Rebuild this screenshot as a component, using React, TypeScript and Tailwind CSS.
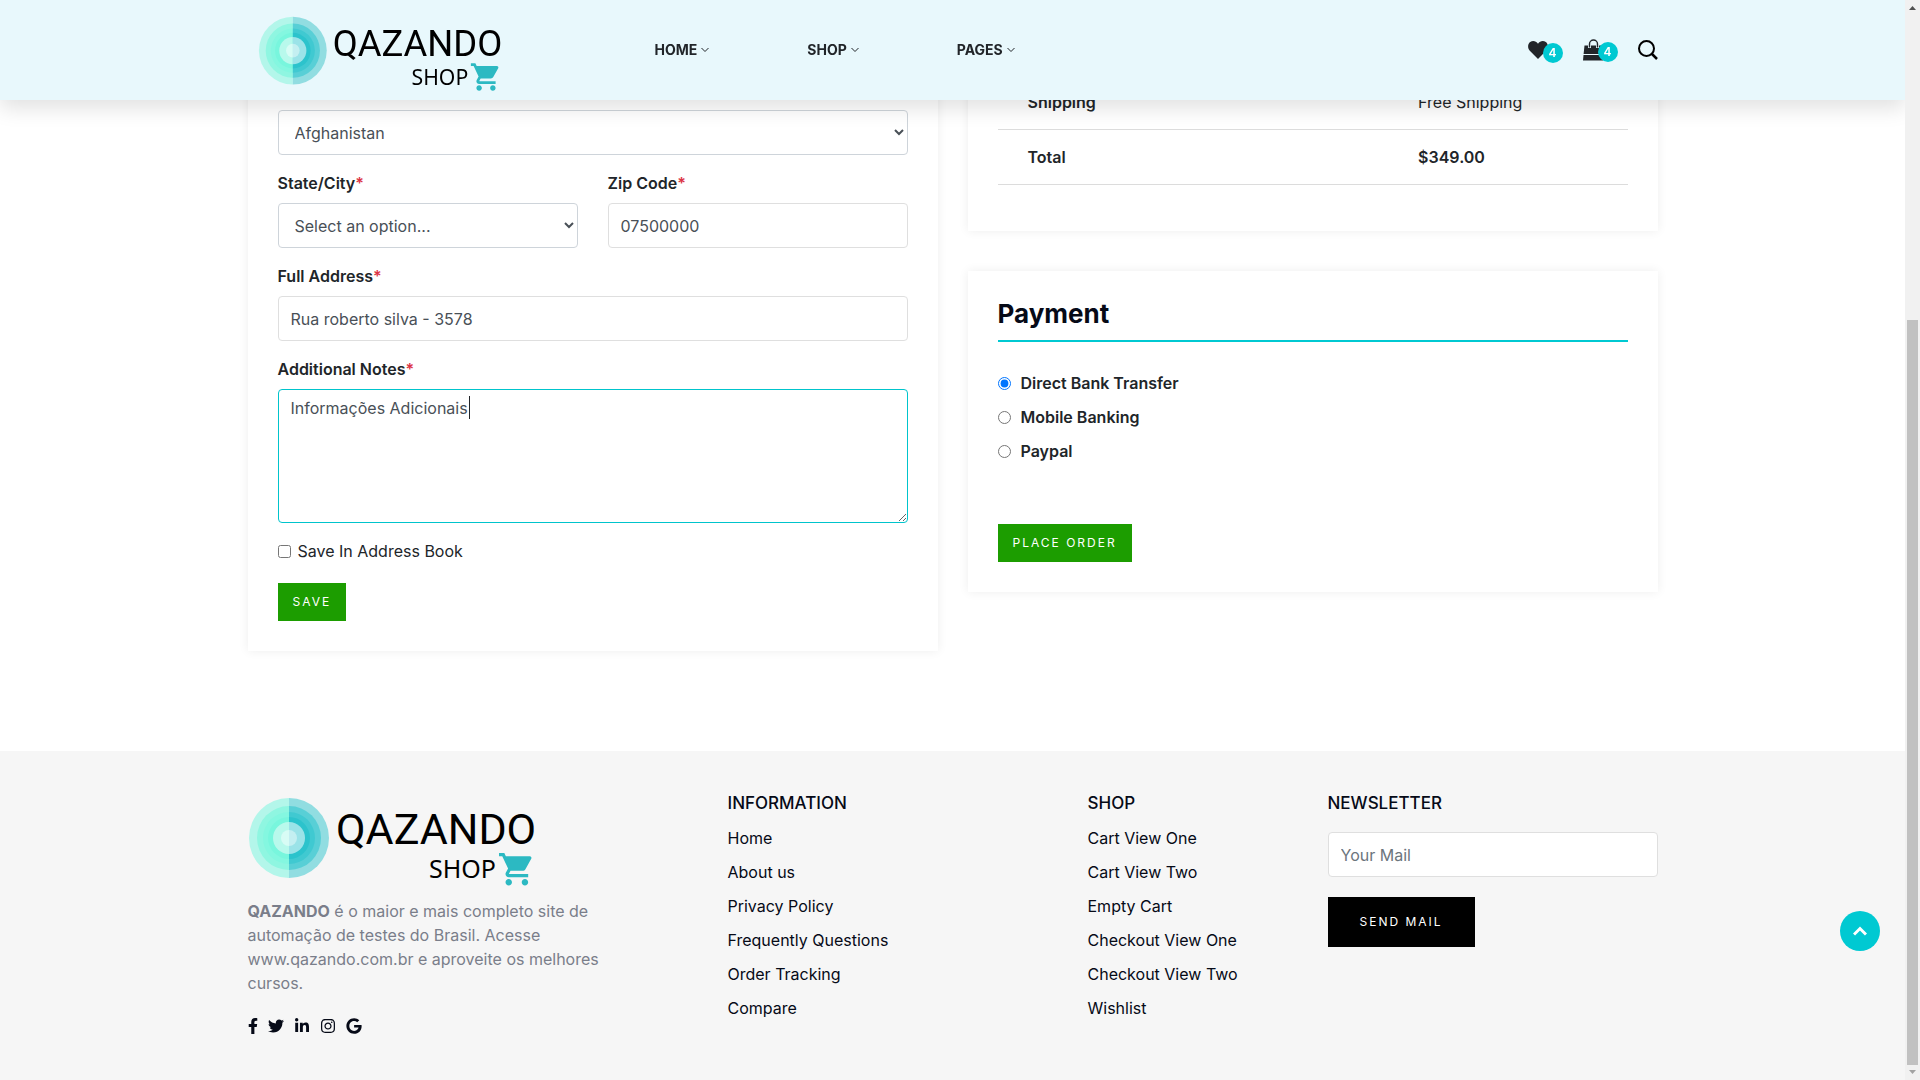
import React from "react";
import { FaFacebookF, FaTwitter, FaLinkedinIn, FaInstagram, FaGoogle } from "react-icons/fa";

const RINGS = [
  { r: 40, left: "#b3f6ea", right: "#91dde1" },
  { r: 32, left: "#8ff6e1", right: "#58cfd6" },
  { r: 26, left: "#84f7e0", right: "#40c9d1" },
  { r: 21, left: "#78f6dd", right: "#2cc3cc" },
  { r: 16, left: "#b8f9ec", right: "#9be3e8" },
  { r: 8, left: "#d8fcf5", right: "#c4eff1" },
];

function Logo({ className }: { className: string }) {
  return (
    <svg viewBox="0 0 290 92" className={className} role="img" aria-label="Qazando Shop">
      {RINGS.map(({ r, left, right }) => (
        <g key={r}>
          <path d={`M41 ${42 - r}a${r} ${r} 0 0 0 0 ${2 * r}z`} fill={left} />
          <path d={`M41 ${42 - r}a${r} ${r} 0 0 1 0 ${2 * r}z`} fill={right} />
        </g>
      ))}
      <text x="88" y="48" fontFamily="Roboto, sans-serif" fontSize="43">
        QAZANDO
      </text>
      <text x="181" y="82" fontFamily="'Noto Sans', sans-serif" fontSize="25">
        SHOP
      </text>
      <path
        transform="translate(249.400 53.800) scale(1.620)"
        fill="#2cb9c2"
        d="M7 18c-1.1 0-1.99.9-1.99 2S5.9 22 7 22s2-.9 2-2-.9-2-2-2zM1 2v2h2l3.6 7.59-1.35 2.45c-.16.28-.25.61-.25.96 0 1.1.9 2 2 2h12v-2H7.42c-.14 0-.25-.11-.25-.25l.03-.12.9-1.63h7.45c.75 0 1.41-.41 1.75-1.03l3.58-6.49A1 1 0 0 0 20 4H5.21l-.94-2H1zm16 16c-1.1 0-1.99.9-1.99 2s.89 2 1.99 2 2-.9 2-2-.9-2-2-2z"
      />
    </svg>
  );
}

function NavItem({ label }: { label: string }) {
  return (
    <a href="#" className="flex items-center gap-1 text-sm font-bold text-[#212529]">
      {label}
      <svg viewBox="0 0 8 6" className="h-1.5 w-2" fill="none" stroke="currentColor">
        <path d="M.5 1L4 4.500L7.500 1" />
      </svg>
    </a>
  );
}

function Count({ value }: { value: number }) {
  return (
    <span className="absolute top-[3px] left-[15px] flex size-5 items-center justify-center rounded-full bg-[#00c9d2] text-xs font-semibold text-white">
      {value}
    </span>
  );
}

function Header() {
  return (
    <header className="fixed inset-x-0 top-0 z-10 mr-[15px] h-25 bg-[#e8f8fc] shadow-[0_8px_20px_rgba(0,0,0,0.12)]">
      <div className="mx-auto flex h-full max-w-[1410px] items-center">
        <a href="#" className="mt-2 ml-2.5">
          <Logo className="h-[78px] w-[246px]" />
        </a>
        <nav className="ml-[151px] flex gap-[98px]">
          <NavItem label="HOME" />
          <NavItem label="SHOP" />
          <NavItem label="PAGES" />
        </nav>
        <div className="ml-auto flex items-center gap-[35px] text-[#212529]">
          <a href="#" aria-label="Wishlist" className="relative block">
            <svg viewBox="0 0 20 20" className="size-5" fill="currentColor">
              <path d="M10 19L1.800 10.800C-.6 8.200-.4 4 2.200 2.100C4.700.3 8 .9 10 3.800C12 .9 15.300.3 17.800 2.100C20.400 4 20.600 8.200 18.200 10.800Z" />
            </svg>
            <Count value={4} />
          </a>
          <a href="#" aria-label="Cart" className="relative block">
            <svg viewBox="0 0 20 22" className="h-[22px] w-5">
              <path d="M1.500 6.500H18.500L19.400 15H.6ZM.5 16H19.500L20 21.500H0Z" fill="currentColor" />
              <path d="M6.500 9V5A4 4 0 0 1 14.500 5V9" fill="none" stroke="#e8f8fc" strokeWidth="3" />
              <path d="M6.500 8.500V5A4 4 0 0 1 14.500 5V8.500" fill="none" stroke="currentColor" strokeWidth="1.400" />
            </svg>
            <Count value={4} />
          </a>
          <button type="button" aria-label="Search" className="block">
            <svg viewBox="0 0 20 20" className="size-5" fill="none" stroke="#000" strokeWidth="2">
              <circle cx="8.500" cy="8.500" r="7.500" />
              <path d="M13.500 13.500L19 19" strokeWidth="2.500" />
            </svg>
          </button>
        </div>
      </div>
    </header>
  );
}

function Field({ id, label, children }: { id: string; label: string; children: React.ReactNode }) {
  return (
    <div className="flex min-w-0 flex-1 flex-col gap-2">
      <label htmlFor={id} className="font-semibold">
        {label}
        <span className="text-[#dc3545]">*</span>
      </label>
      {children}
    </div>
  );
}

const selectBox = "h-[45px] w-full rounded border border-[#ced4da] bg-white px-3 text-[#495057]";
const inputBox = "h-[45px] w-full rounded border border-[#dfdfdf] bg-white px-3 text-[#495057] placeholder:text-[#6c757d]";
const card = "bg-white px-[30px] shadow-[0_0_10px_rgba(0,0,0,0.07)]";
const greenButton = "block h-[38px] bg-[#1c9d00] px-[15px] text-xs tracking-[2px] text-white";

function BillingForm() {
  return (
    <form className={`${card} flex flex-col gap-4 pt-[78px] pb-[30px]`}>
      <Field id="country" label="Country">
        <select id="country" className={selectBox}>
          <option>Afghanistan</option>
        </select>
      </Field>
      <div className="flex gap-[30px]">
        <Field id="city" label="State/City">
          <select id="city" className={selectBox}>
            <option>Select an option...</option>
          </select>
        </Field>
        <Field id="zip" label="Zip Code">
          <input id="zip" className={inputBox} defaultValue="07500000" />
        </Field>
      </div>
      <Field id="address" label="Full Address">
        <input id="address" className={inputBox} defaultValue="Rua roberto silva - 3578" />
      </Field>
      <Field id="notes" label="Additional Notes">
        <div className="relative">
          <textarea
            id="notes"
            className="block h-[134px] w-full rounded border border-[#00c4cc] bg-white px-3 py-1.5 text-[#495057] caret-transparent outline-none"
            defaultValue="Informações Adicionais"
          />
          <span aria-hidden="true" className="absolute top-[7px] left-[191px] h-[23px] w-px bg-[#212529]" />
        </div>
      </Field>
      <label className="flex items-center gap-[7px]">
        <input type="checkbox" className="size-[13px]" />
        Save In Address Book
      </label>
      <div className="mt-1">
        <button type="button" className={greenButton}>SAVE</button>
      </div>
    </form>
  );
}

function Summary() {
  return (
    <section className={`${card} pt-[75px] pb-[46px]`}>
      <table className="w-full table-fixed">
        <tbody>
          <tr className="border-b border-[#dcdcdc]">
            <th className="w-[62%] px-[30px] py-[15px] text-left font-semibold">Shipping</th>
            <td className="px-[30px] py-[15px]">Free Shipping</td>
          </tr>
          <tr className="border-b border-[#dcdcdc]">
            <th className="px-[30px] py-[15px] text-left font-semibold">Total</th>
            <td className="px-[30px] py-[15px] font-semibold">$349.00</td>
          </tr>
        </tbody>
      </table>
    </section>
  );
}

function Payment() {
  return (
    <section className={`${card} pt-[25px] pb-[30px]`}>
      <h3 className="border-b-2 border-[#00c9d2] pb-2 text-[26px] leading-9 font-bold text-[#060a17]">Payment</h3>
      <div className="mt-[29px] mb-[61px] flex flex-col gap-2.5">
        {["Direct Bank Transfer", "Mobile Banking", "Paypal"].map((name, i) => (
          <label key={name} className="flex items-center gap-2.5 font-semibold">
            <input type="radio" name="payment" defaultChecked={i === 0} className="size-[13px]" />
            {name}
          </label>
        ))}
      </div>
      <button type="button" className={greenButton}>PLACE ORDER</button>
    </section>
  );
}

function Links({ title, items, className }: { title: string; items: string[]; className: string }) {
  return (
    <div className={className}>
      <h3 className="text-[17px] leading-6 font-medium">{title}</h3>
      <ul className="mt-[11px] flex flex-col gap-2.5">
        {items.map((item) => (
          <li key={item}>
            <a href="#">{item}</a>
          </li>
        ))}
      </ul>
    </div>
  );
}

function Footer() {
  return (
    <footer className="mt-25 flex-1 bg-[#f6f6f6] pt-10 pb-10 text-[#060a17]">
      <div className="mx-auto grid max-w-[1410px] grid-cols-12 gap-x-[30px]">
        <div className="col-span-4 pt-[5px]">
          <Logo className="h-[92px] w-[290px]" />
          <p className="mt-[11px] max-w-[380px] text-[#7a7e8a]">
            <strong className="font-bold">QAZANDO</strong> é o maior e mais completo site de automação de testes do
            Brasil. Acesse www.qazando.com.br e aproveite os melhores cursos.
          </p>
          <div className="mt-[22px] flex items-center gap-2.5">
            <a href="#" aria-label="Facebook"><FaFacebookF className="h-[18px] w-2.5" /></a>
            <a href="#" aria-label="Twitter"><FaTwitter className="size-4" /></a>
            <a href="#" aria-label="LinkedIn"><FaLinkedinIn className="size-4" /></a>
            <a href="#" aria-label="Instagram"><FaInstagram className="size-4" /></a>
            <a href="#" aria-label="Google"><FaGoogle className="size-4" /></a>
          </div>
        </div>
        <Links
          className="col-span-3"
          title="INFORMATION"
          items={["Home", "About us", "Privacy Policy", "Frequently Questions", "Order Tracking", "Compare"]}
        />
        <Links
          className="col-span-2"
          title="SHOP"
          items={["Cart View One", "Cart View Two", "Empty Cart", "Checkout View One", "Checkout View Two", "Wishlist"]}
        />
        <form className="col-span-3">
          <h3 className="text-[17px] leading-6 font-medium">NEWSLETTER</h3>
          <input type="email" aria-label="Your Mail" placeholder="Your Mail" className={`${inputBox} mt-[17px]`} />
          <button type="button" className="mt-5 block h-[50px] bg-black px-8 text-xs tracking-[2px] text-white">
            SEND MAIL
          </button>
        </form>
      </div>
    </footer>
  );
}

function ScrollTrack() {
  return (
    <div aria-hidden="true" className="fixed inset-y-0 right-0 z-20 flex w-[15px] flex-col items-center bg-[#f1f1f1]">
      <svg viewBox="0 0 15 15" className="size-[15px] shrink-0" fill="#505050">
        <path d="M4 10L7.500 6L11 10Z" />
      </svg>
      <div className="flex min-h-0 w-full flex-1 flex-col justify-end px-0.5">
        <div className="h-[71%] bg-[#c1c1c1]" />
      </div>
      <svg viewBox="0 0 15 15" className="size-[15px] shrink-0" fill="#a3a3a3">
        <path d="M4 5L7.500 9L11 5Z" />
      </svg>
    </div>
  );
}

export default function App() {
  return (
    <div className="flex min-h-screen flex-col bg-white pr-[15px] font-['Inter',sans-serif] text-base text-[#212529]">
      <Header />
      <main className="mx-auto grid w-full max-w-[1410px] grid-cols-2 items-start gap-[30px]">
        <BillingForm />
        <div className="flex min-w-0 flex-col gap-10">
          <Summary />
          <Payment />
        </div>
      </main>
      <Footer />
      <button
        type="button"
        aria-label="Back to top"
        className="fixed right-10 bottom-[129px] z-10 flex size-10 items-center justify-center rounded-full bg-[#00c9d2]"
      >
        <svg viewBox="0 0 14 10" className="h-2.5 w-3.5" fill="none" stroke="#fff" strokeWidth="3">
          <path d="M1 8.500L7 2.500L13 8.500" />
        </svg>
      </button>
      <ScrollTrack />
    </div>
  );
}
